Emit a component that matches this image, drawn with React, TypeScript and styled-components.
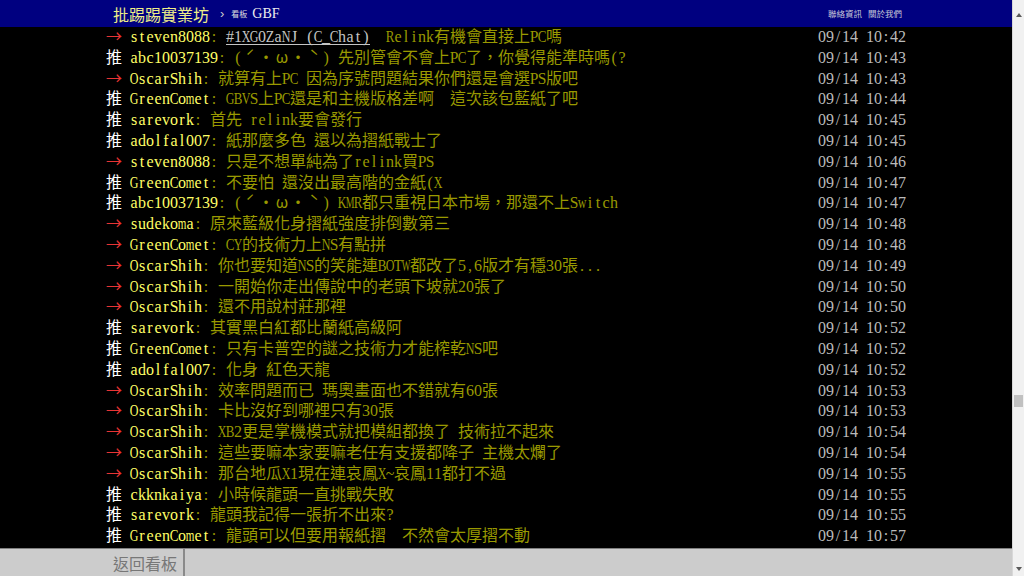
import React from "react";
import styled, { createGlobalStyle } from "styled-components";

const GlobalStyle = createGlobalStyle`
  html, body {
    margin: 0;
    padding: 0;
    height: 100%;
    overflow: hidden;
    background: #000;
  }
  #root { height: 100%; }
`;

const Page = styled.div`
  display: flex;
  height: 100vh;
  background: #000;
`;

const Main = styled.div`
  flex: 1;
  min-width: 0;
  display: flex;
  flex-direction: column;
`;

const Topbar = styled.header`
  flex-shrink: 0;
  height: 27px;
  background: #000080;
`;

const Wrap = styled.div`
  width: 800px;
  height: 100%;
  margin: 0 auto;
  display: flex;
  align-items: center;
`;

const Logo = styled.a`
  margin-left: 7px;
  font: 16px/1 "Noto Sans CJK TC", sans-serif;
  color: #eeee88;
  text-decoration: none;
`;

const Crumb = styled.span`
  margin-left: 11px;
  font: 13px/1 "Liberation Sans", sans-serif;
  color: #cccccc;
`;

const BoardLabel = styled.span`
  margin-left: 7px;
  font: 8px/1 "Noto Sans CJK TC", sans-serif;
  color: #dddddd;
`;

const BoardName = styled.a`
  margin-left: 5px;
  font: 14px/1 "Liberation Serif", serif;
  color: #eeeeee;
  text-decoration: none;
`;

const NavLinks = styled.nav`
  margin-left: auto;
  margin-right: 4px;
  display: flex;
  gap: 6px;
`;

const NavLink = styled.a`
  font: 8.5px/1 "Noto Sans CJK TC", sans-serif;
  color: #c8c8d8;
  text-decoration: none;
`;

const Content = styled.main`
  flex: 1;
  min-height: 0;
  overflow: hidden;
`;

const Screen = styled.div`
  width: 800px;
  margin: 0 auto;
`;

const Row = styled.div`
  display: flex;
  align-items: baseline;
  height: 20.8px;
  font: 16px/18px "Liberation Serif", serif;
  white-space: nowrap;
`;

const Line = styled.span`
  flex: 1;
  min-width: 0;
  overflow: hidden;
`;

/* one half-width column of the 8px terminal grid */
const Cell = styled.span<{ $k: number }>`
  display: inline-flex;
  justify-content: center;
  width: 8px;
  line-height: 16px;
  font-family: "Liberation Serif", serif;
  font-size: 16px;
  transform: ${(p) => (p.$k < 1 ? `scaleX(${p.$k})` : "none")};
`;

const Space = styled.span`
  display: inline-block;
  width: 8px;
`;

const Full = styled.span`
  font-family: "Noto Sans CJK TC", sans-serif;
  font-size: 16px;
  line-height: 16px;
`;

const Glyph = styled.span`
  display: inline-block;
  width: 16px;
  text-align: center;
  font-family: "Noto Sans CJK TC", sans-serif;
  font-size: 16px;
  line-height: 16px;
`;

const Tag = styled.span<{ $kind: string }>`
  color: ${(p) => (p.$kind === "推" ? "#ffffff" : "#e83434")};
`;

const UserId = styled.span`
  color: #ffff66;
`;

const PushText = styled.span`
  color: #999900;
`;

const PostLink = styled.span`
  color: #c4c4c4;
  font: 16px "Liberation Serif", serif;
  background: linear-gradient(#c4c4c4, #c4c4c4) 0 100% / 100% 1px no-repeat;
`;

const Time = styled.span`
  margin-left: auto;
  color: #bbbbbb;
`;

const Footer = styled.footer`
  flex-shrink: 0;
  height: 27px;
  border-top: 1px solid #808080;
  background: #cccccc;
`;

const FooterWrap = styled.div`
  width: 800px;
  height: 100%;
  margin: 0 auto;
  display: flex;
`;

const BackLink = styled.a`
  display: flex;
  align-items: center;
  padding: 0 6px 0 7px;
  border-right: 2px solid #8a8a8a;
  font: 16px/1 "Noto Sans CJK TC", sans-serif;
  color: #777777;
  text-decoration: none;
`;

const Scrollbar = styled.aside`
  width: 12px;
  flex-shrink: 0;
  box-sizing: border-box;
  border-left: 1px solid #d8d8d8;
  background: #f1f1f1;
  display: flex;
  flex-direction: column;
`;

const ArrowBox = styled.div<{ $h: number }>`
  height: ${(p) => p.$h}px;
  display: flex;
  align-items: center;
  justify-content: center;
  flex-shrink: 0;
`;

const Track = styled.div`
  flex: 1;
  display: flex;
  flex-direction: column;
  align-items: center;
`;

const Thumb = styled.div<{ $top: number }>`
  margin-top: ${(p) => p.$top}px;
  width: 9px;
  height: 12px;
  background: #c1c1c1;
`;

/* Times-metric advance widths (1/1000 em) for printable ASCII 32..126 */
const ADV = [
  250, 333, 408, 500, 500, 833, 778, 180, 333, 333, 500, 564, 250, 333, 250, 278,
  500, 500, 500, 500, 500, 500, 500, 500, 500, 500, 278, 278, 564, 564, 564, 444,
  921, 722, 667, 667, 722, 611, 556, 722, 722, 333, 389, 722, 611, 889, 722, 722,
  556, 722, 667, 556, 611, 722, 722, 944, 722, 722, 611, 333, 278, 333, 469, 500,
  333, 444, 500, 444, 500, 444, 333, 500, 500, 278, 278, 500, 278, 778, 500, 500,
  500, 500, 333, 389, 278, 500, 500, 722, 500, 500, 444, 480, 200, 480, 541,
];

function squeeze(ch: string) {
  const w = ADV[ch.charCodeAt(0) - 32] || 500;
  return w > 540 ? Math.round((540 / w) * 100) / 100 : 1;
}

function HalfText({ text }: { text: string }) {
  return (
    <>
      {Array.from(text).map((ch, i) =>
        ch === " " ? (
          <Space key={i} />
        ) : (
          <Cell key={i} $k={squeeze(ch)}>
            {ch}
          </Cell>
        )
      )}
    </>
  );
}

function Mixed({ text }: { text: string }) {
  const re = /([\x20-\x7e]+)|([\u3000-\u30ff\u4e00-\u9fff\uff00-\uffef]+)|([\s\S])/g;
  const out: React.ReactNode[] = [];
  let m: RegExpExecArray | null;
  let i = 0;
  while ((m = re.exec(text))) {
    if (m[1]) out.push(<HalfText key={i++} text={m[1]} />);
    else if (m[2]) out.push(<Full key={i++}>{m[2]}</Full>);
    else out.push(<Glyph key={i++}>{m[3]}</Glyph>);
  }
  return <>{out}</>;
}

type Push = { t: string; u: string; c: string; d: string; link?: string };

const pushes: Push[] = [
  { t: "→", u: "steven8088", link: "#1XG0ZaNJ (C_Chat)", c: "  Relink有機會直接上PC嗎", d: "09/14 10:42" },
  { t: "推", u: "abc10037139", c: "(ˊ・ω・ˋ) 先別管會不會上PC了，你覺得能準時嗎(?", d: "09/14 10:43" },
  { t: "→", u: "OscarShih", c: "就算有上PC 因為序號問題結果你們還是會選PS版吧", d: "09/14 10:43" },
  { t: "推", u: "GreenComet", c: "GBVS上PC還是和主機版格差啊　這次該包藍紙了吧", d: "09/14 10:44" },
  { t: "推", u: "sarevork", c: "首先 relink要會發行", d: "09/14 10:45" },
  { t: "推", u: "adolfal007", c: "紙那麼多色 還以為摺紙戰士了", d: "09/14 10:45" },
  { t: "→", u: "steven8088", c: "只是不想單純為了relink買PS", d: "09/14 10:46" },
  { t: "推", u: "GreenComet", c: "不要怕 還沒出最高階的金紙(X", d: "09/14 10:47" },
  { t: "推", u: "abc10037139", c: "(ˊ・ω・ˋ) KMR都只重視日本市場，那還不上Switch", d: "09/14 10:47" },
  { t: "→", u: "sudekoma", c: "原來藍級化身摺紙強度排倒數第三", d: "09/14 10:48" },
  { t: "→", u: "GreenComet", c: "CY的技術力上NS有點拼", d: "09/14 10:48" },
  { t: "→", u: "OscarShih", c: "你也要知道NS的笑能連BOTW都改了5,6版才有穩30張...", d: "09/14 10:49" },
  { t: "→", u: "OscarShih", c: "一開始你走出傳說中的老頭下坡就20張了", d: "09/14 10:50" },
  { t: "→", u: "OscarShih", c: "還不用說村莊那裡", d: "09/14 10:50" },
  { t: "推", u: "sarevork", c: "其實黑白紅都比蘭紙高級阿", d: "09/14 10:52" },
  { t: "推", u: "GreenComet", c: "只有卡普空的謎之技術力才能榨乾NS吧", d: "09/14 10:52" },
  { t: "推", u: "adolfal007", c: "化身 紅色天龍", d: "09/14 10:52" },
  { t: "→", u: "OscarShih", c: "效率問題而已 瑪奧畫面也不錯就有60張", d: "09/14 10:53" },
  { t: "→", u: "OscarShih", c: "卡比沒好到哪裡只有30張", d: "09/14 10:53" },
  { t: "→", u: "OscarShih", c: "XB2更是掌機模式就把模組都換了 技術拉不起來", d: "09/14 10:54" },
  { t: "→", u: "OscarShih", c: "這些要嘛本家要嘛老任有支援都降子 主機太爛了", d: "09/14 10:54" },
  { t: "→", u: "OscarShih", c: "那台地瓜X1現在連哀鳳X~哀鳳11都打不過", d: "09/14 10:55" },
  { t: "推", u: "ckknkaiya", c: "小時候龍頭一直挑戰失敗", d: "09/14 10:55" },
  { t: "推", u: "sarevork", c: "龍頭我記得一張折不出來?", d: "09/14 10:55" },
  { t: "推", u: "GreenComet", c: "龍頭可以但要用報紙摺　不然會太厚摺不動", d: "09/14 10:57" },
  { t: "→", u: "OscarShih", c: "大家應該都摺過吧", d: "09/14 10:58" },
];

function Triangle({ up }: { up?: boolean }) {
  return (
    <svg width="6" height="4" viewBox="0 0 6 4">
      <polygon points={up ? "3,0 6,4 0,4" : "0,0 6,0 3,4"} fill="#5a5a5a" />
    </svg>
  );
}

export default function App() {
  return (
    <>
      <GlobalStyle />
      <Page>
        <Main>
          <Topbar>
            <Wrap>
              <Logo>批踢踢實業坊</Logo>
              <Crumb>›</Crumb>
              <BoardLabel>看板</BoardLabel>
              <BoardName>GBF</BoardName>
              <NavLinks>
                <NavLink>聯絡資訊</NavLink>
                <NavLink>關於我們</NavLink>
              </NavLinks>
            </Wrap>
          </Topbar>
          <Content>
            <Screen>
              {pushes.map((p, i) => (
                <Row key={i}>
                  <Line>
                    <Tag $kind={p.t}>
                      <Mixed text={p.t + " "} />
                    </Tag>
                    <UserId>
                      <HalfText text={p.u} />
                    </UserId>
                    <PushText>
                      <HalfText text=": " />
                      {p.link && (
                        <PostLink>
                          <HalfText text={p.link} />
                        </PostLink>
                      )}
                      <Mixed text={p.c} />
                    </PushText>
                  </Line>
                  <Time>
                    <HalfText text={" " + p.d} />
                  </Time>
                </Row>
              ))}
            </Screen>
          </Content>
          <Footer>
            <FooterWrap>
              <BackLink>返回看板</BackLink>
            </FooterWrap>
          </Footer>
        </Main>
        <Scrollbar>
          <ArrowBox $h={30}>
            <Triangle up />
          </ArrowBox>
          <Track>
            <Thumb $top={365} />
          </Track>
          <ArrowBox $h={14}>
            <Triangle />
          </ArrowBox>
        </Scrollbar>
      </Page>
    </>
  );
}
